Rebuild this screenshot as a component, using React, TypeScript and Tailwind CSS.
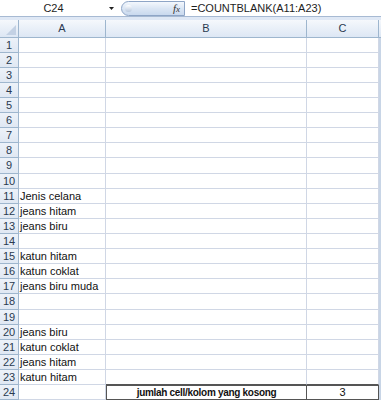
import React from 'react';

const cells: Record<number, string> = {
  11: 'Jenis celana',
  12: 'jeans hitam',
  13: 'jeans biru',
  15: 'katun hitam',
  16: 'katun coklat',
  17: 'jeans biru muda',
  20: 'jeans biru',
  21: 'katun coklat',
  22: 'jeans hitam',
  23: 'katun hitam',
};

// a couple of rows are 1px taller, like the screenshot's uneven scaling
const tallRows = [9, 18];

function FormulaBar() {
  return (
    <div className="flex h-[17px] items-center border-b border-[#a7bad3] bg-white">
      <div className="flex w-[107px] justify-center text-[11px] text-[#1e1e1e]">C24</div>
      <svg width="8" height="5" viewBox="0 0 8 5" className="ml-[1px]">
        <path d="M1 1h5l-2.5 3z" fill="#222" />
      </svg>
      <div className="ml-[5px] flex h-[15px] w-[64px] items-center rounded-l-full border border-[#8ea5c6] bg-gradient-to-b from-[#f4f8fd] via-[#dbe6f4] to-[#c9d9ee] pl-[3px] pr-[4px]">
        <div className="h-[7px] w-[7px] rounded-full bg-gradient-to-b from-[#ffffff] to-[#b8c8de]" />
        <span className="ml-auto font-['Liberation_Serif'] text-[11px] italic text-[#333]">
          f<span className="text-[9px]">x</span>
        </span>
      </div>
      <div className="ml-[6px] text-[11px] text-[#1e1e1e]">=COUNTBLANK(A11:A23)</div>
    </div>
  );
}

function HeaderRow() {
  return (
    <div className="flex h-[18px] border-b border-[#9eb6ce] bg-gradient-to-b from-[#f5f8fc] to-[#dde7f4] text-[11px] text-[#2a3a50]">
      <div className="relative w-[19px] border-r border-[#9eb6ce]">
        <svg width="10" height="10" viewBox="0 0 10 10" className="absolute bottom-[2px] right-[2px]">
          <path d="M10 0v10H0z" fill="#c3d1e4" />
        </svg>
      </div>
      <div className="flex w-[87px] items-center justify-center border-r border-[#9eb6ce]">A</div>
      <div className="flex w-[201px] items-center justify-center border-r border-[#9eb6ce]">B</div>
      <div className="flex w-[72px] items-center justify-center border-r border-[#9eb6ce]">C</div>
    </div>
  );
}

function Row({ n }: { n: number }) {
  const last = n === 24;
  const h = tallRows.includes(n) ? 'h-[16px]' : 'h-[15px]';
  return (
    <div className={`flex ${h} text-[11px]`}>
      <div className="flex w-[19px] items-center justify-center border-r border-b border-[#9eb6ce] bg-gradient-to-b from-[#edf2f9] to-[#e0e8f3] text-[#2a3a50]">
        {n}
      </div>
      <div className="flex w-[87px] items-center border-r border-b border-[#d0d7e5] bg-white pl-[1px] text-[#111]">
        {cells[n] ?? ''}
      </div>
      {last ? (
        <>
          <div className="flex w-[201px] items-center justify-center border border-[#555] bg-white text-[10px] font-bold tracking-[-0.3px] text-[#111]">
            jumlah cell/kolom yang kosong
          </div>
          <div className="flex w-[72px] items-center justify-center border-y border-r border-[#555] bg-white text-[#111]">
            3
          </div>
        </>
      ) : (
        <>
          <div className={`w-[201px] border-r border-b bg-white ${n === 23 ? 'border-b-[#555] border-r-[#d0d7e5]' : 'border-[#d0d7e5]'}`} />
          <div className={`w-[72px] border-r border-b bg-white ${n === 23 ? 'border-b-[#555] border-r-[#d0d7e5]' : 'border-[#d0d7e5]'}`} />
        </>
      )}
    </div>
  );
}

export default function App() {
  const rows = Array.from({ length: 24 }, (_, i) => i + 1);
  return (
    <div className="h-[400px] w-[381px] overflow-hidden bg-[#c8d5e6] font-['Liberation_Sans',sans-serif]">
      <FormulaBar />
      <div className="h-[3px] bg-[#dfe8f5]" />
      <HeaderRow />
      {rows.map((n) => (
        <Row key={n} n={n} />
      ))}
    </div>
  );
}
